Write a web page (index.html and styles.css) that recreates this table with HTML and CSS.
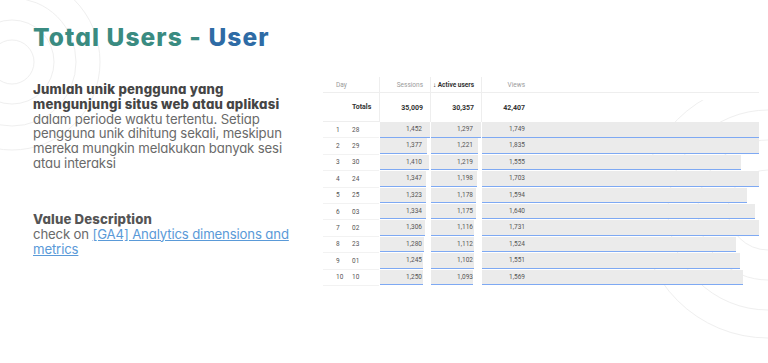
FILE: index.html
```html
<!DOCTYPE html>
<html lang="id">
<head>
<meta charset="utf-8">
<title>Total Users - User</title>
<link rel="stylesheet" href="styles.css">
</head>
<body>
<div class="slide">
  <svg class="deco deco-left" width="140" height="180" viewBox="0 0 140 180" aria-hidden="true">
    <g fill="none" stroke="#efefef" stroke-width="1">
      <circle cx="12" cy="62" r="22"/>
      <circle cx="12" cy="62" r="42"/>
      <circle cx="12" cy="62" r="64"/>
      <circle cx="12" cy="62" r="88"/>
    </g>
  </svg>
  <svg class="deco deco-right" width="120" height="260" viewBox="0 0 120 260" aria-hidden="true">
    <g fill="none" stroke="#efefef" stroke-width="1">
      <circle cx="120" cy="110" r="40"/>
      <circle cx="120" cy="110" r="70"/>
      <circle cx="120" cy="110" r="100"/>
      <circle cx="120" cy="110" r="128"/>
    </g>
  </svg>

  <div class="content">
    <div class="left">
      <h1 class="title"><span class="teal">Total Users - </span><span class="blue">User</span></h1>
      <p class="desc"><strong>Jumlah unik pengguna yang<br>mengunjungi situs web atau aplikasi</strong><br>dalam periode waktu tertentu. Setiap<br>pengguna unik dihitung sekali, meskipun<br>mereka mungkin melakukan banyak sesi<br>atau interaksi</p>
      <p class="value"><strong>Value Description</strong><br>check on <a href="#">[GA4] Analytics dimensions and<br>metrics</a></p>
    </div>

    <div class="table">
      <div class="row head">
        <div class="c idx">Day</div>
        <div class="c dim"></div>
        <div class="c m"><span class="num">Sessions</span></div>
        <div class="c m"><span class="num sorted">↓ Active users</span></div>
        <div class="c m v"><span class="num">Views</span></div>
      </div>
      <div class="row totals">
        <div class="c idx"></div>
        <div class="c dim">Totals</div>
        <div class="c m"><span class="num">35,009</span></div>
        <div class="c m"><span class="num">30,357</span></div>
        <div class="c m v"><span class="num">42,407</span></div>
      </div>

      <div class="row data">
        <div class="c idx">1</div><div class="c dim">28</div>
        <div class="c m"><div class="bar" style="width:100%"></div><span class="num">1,452</span></div>
        <div class="c m"><div class="bar" style="width:100%"></div><span class="num">1,297</span></div>
        <div class="c m v"><div class="bar" style="width:100%"></div><span class="num">1,749</span></div>
      </div>
      <div class="row data">
        <div class="c idx">2</div><div class="c dim">29</div>
        <div class="c m"><div class="bar" style="width:94.8%"></div><span class="num">1,377</span></div>
        <div class="c m"><div class="bar" style="width:94.1%"></div><span class="num">1,221</span></div>
        <div class="c m v"><div class="bar" style="width:100%"></div><span class="num">1,835</span></div>
      </div>
      <div class="row data">
        <div class="c idx">3</div><div class="c dim">30</div>
        <div class="c m"><div class="bar" style="width:97.1%"></div><span class="num">1,410</span></div>
        <div class="c m"><div class="bar" style="width:94%"></div><span class="num">1,219</span></div>
        <div class="c m v"><div class="bar" style="width:93.5%"></div><span class="num">1,555</span></div>
      </div>
      <div class="row data">
        <div class="c idx">4</div><div class="c dim">24</div>
        <div class="c m"><div class="bar" style="width:92.8%"></div><span class="num">1,347</span></div>
        <div class="c m"><div class="bar" style="width:92.4%"></div><span class="num">1,198</span></div>
        <div class="c m v"><div class="bar" style="width:100%"></div><span class="num">1,703</span></div>
      </div>
      <div class="row data">
        <div class="c idx">5</div><div class="c dim">25</div>
        <div class="c m"><div class="bar" style="width:91.1%"></div><span class="num">1,323</span></div>
        <div class="c m"><div class="bar" style="width:90.8%"></div><span class="num">1,178</span></div>
        <div class="c m v"><div class="bar" style="width:95.7%"></div><span class="num">1,594</span></div>
      </div>
      <div class="row data">
        <div class="c idx">6</div><div class="c dim">03</div>
        <div class="c m"><div class="bar" style="width:91.9%"></div><span class="num">1,334</span></div>
        <div class="c m"><div class="bar" style="width:90.6%"></div><span class="num">1,175</span></div>
        <div class="c m v"><div class="bar" style="width:98.6%"></div><span class="num">1,640</span></div>
      </div>
      <div class="row data">
        <div class="c idx">7</div><div class="c dim">02</div>
        <div class="c m"><div class="bar" style="width:89.9%"></div><span class="num">1,306</span></div>
        <div class="c m"><div class="bar" style="width:86%"></div><span class="num">1,116</span></div>
        <div class="c m v"><div class="bar" style="width:100%"></div><span class="num">1,731</span></div>
      </div>
      <div class="row data">
        <div class="c idx">8</div><div class="c dim">23</div>
        <div class="c m"><div class="bar" style="width:88.2%"></div><span class="num">1,280</span></div>
        <div class="c m"><div class="bar" style="width:85.7%"></div><span class="num">1,112</span></div>
        <div class="c m v"><div class="bar" style="width:91.7%"></div><span class="num">1,524</span></div>
      </div>
      <div class="row data">
        <div class="c idx">9</div><div class="c dim">01</div>
        <div class="c m"><div class="bar" style="width:85.7%"></div><span class="num">1,245</span></div>
        <div class="c m"><div class="bar" style="width:85%"></div><span class="num">1,102</span></div>
        <div class="c m v"><div class="bar" style="width:93.1%"></div><span class="num">1,551</span></div>
      </div>
      <div class="row data">
        <div class="c idx">10</div><div class="c dim">10</div>
        <div class="c m"><div class="bar" style="width:86.1%"></div><span class="num">1,250</span></div>
        <div class="c m"><div class="bar" style="width:84.3%"></div><span class="num">1,093</span></div>
        <div class="c m v"><div class="bar" style="width:94.2%"></div><span class="num">1,569</span></div>
      </div>
    </div>
  </div>
</div>
</body>
</html>
```
FILE: styles.css
```css
* { box-sizing: border-box; }
html, body { margin: 0; padding: 0; background: #ffffff; }
.slide {
  position: relative;
  width: 768px;
  height: 363px;
  overflow: hidden;
  background: #ffffff;
  font-family: Inter, "Noto Sans", sans-serif;
  font-feature-settings: "cv11" 1;
}
.deco { position: absolute; }
.deco-left { left: 0; top: 0; }
.deco-right { right: 0; top: 100px; }

.content {
  position: relative;
  display: flex;
  align-items: flex-start;
}
.left {
  flex: 0 0 323px;
  width: 323px;
  padding-left: 33px;
  padding-top: 22px;
}
.title {
  margin: 0;
  font-size: 24.5px;
  line-height: 30px;
  font-weight: 800;
  letter-spacing: 1.1px;
  white-space: nowrap;
}
.teal { color: #3a8b81; }
.blue { color: #2e6ba5; }

.desc {
  margin: 30px 0 0;
  font-size: 13.2px;
  line-height: 14.8px;
  letter-spacing: -0.15px;
  color: #6a6a6a;
  white-space: nowrap;
}
.desc strong { color: #454545; font-weight: 800; letter-spacing: 0.2px; }
.value {
  margin: 41px 0 0;
  font-size: 13.2px;
  line-height: 15px;
  letter-spacing: -0.15px;
  color: #6a6a6a;
  white-space: nowrap;
}
.value strong { color: #555555; font-weight: 800; letter-spacing: 0.15px; }
.value a { color: #5a9ad8; text-decoration: underline; text-underline-offset: 1px; }

/* table */
.table {
  margin-top: 77px;
  width: 436px;
  font-family: Roboto, "Liberation Sans", sans-serif;
  font-feature-settings: normal;
  font-size: 6.5px;
  color: #555555;
}
.row {
  display: grid;
  grid-template-columns: 29px 27px 51px 51px 278px;
}
.c {
  display: flex;
  align-items: center;
  min-width: 0;
}
.idx { padding-left: 13px; }
.row.head { height: 16px; border-bottom: 1px solid #eeeeee; color: #9a9a9a; }
.row.head .m, .row.totals .m { border-left: 1px solid #eeeeee; }
.row.totals { height: 29px; font-weight: 700; color: #333333; font-size: 7px; }
.row.totals .idx, .row.totals .dim { border-bottom: 1px solid #eeeeee; }
.m { justify-content: flex-start; }
.num {
  width: 43px;
  text-align: right;
  white-space: nowrap;
}
.m .num { grid-area: 1 / 1; align-self: center; }
.sorted { color: #333333; font-weight: 700; }

.row.data { height: 16.4px; }
.row.data .idx, .row.data .dim { border-bottom: 1px solid #f2f2f2; }
.row.data .m {
  display: grid;
  grid-template-columns: 1fr;
  grid-template-rows: 100%;
  padding: 0 0 0.9px 1px;
}
.row.data .m .num { width: 42px; padding-bottom: 1.5px; }
.row.data .v .num { width: 43px; }
.bar {
  grid-area: 1 / 1;
  height: 100%;
  background: #ebebeb;
  border-bottom: 1.6px solid #7ea9f3;
}
```
